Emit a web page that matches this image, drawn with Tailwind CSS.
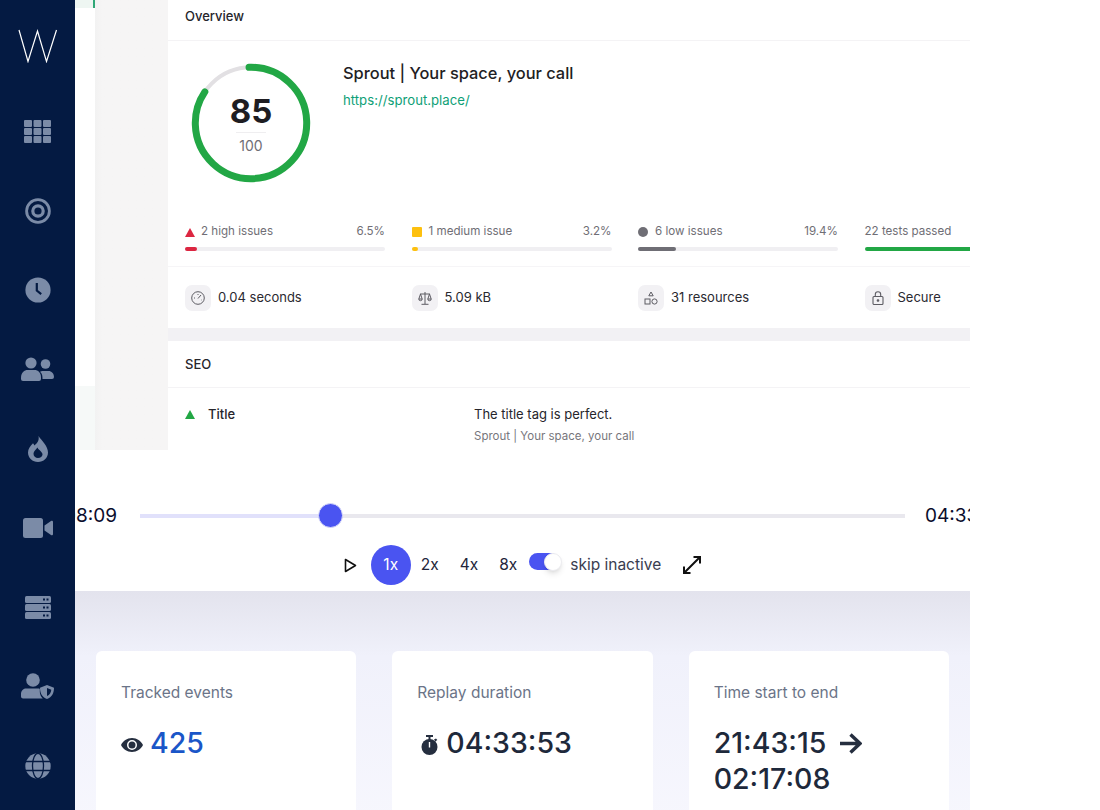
<!DOCTYPE html>
<html lang="en">
<head>
  <meta charset="UTF-8">
  <meta name="viewport" content="width=device-width, initial-scale=1.0">
  <title>Session replay</title>
  <script src="https://cdn.jsdelivr.net/npm/@tailwindcss/browser@4"></script>
</head>
<body class="bg-white font-['Inter',sans-serif]">
  <div class="flex w-[1100px] h-[810px] overflow-hidden bg-white">
    <!-- Sidebar -->
    <aside class="w-[75px] h-full shrink-0 bg-[#041a42] flex flex-col items-center">
      <div class="h-[92px] flex items-center justify-center">
        <svg width="40" height="34" viewBox="0 0 40 34" fill="none" stroke="#fff" stroke-width="1.2"><path d="M1 1L10 32.500L19.500 2L28.500 32.500L38.500 1"/></svg>
      </div>
      <div class="h-[79.25px] flex items-center justify-center">
        <svg width="27" height="23" viewBox="0 0 27 23" fill="#7b8ba7"><rect width="8" height="7" rx="1"/><rect x="9.5" width="8" height="7" rx="1"/><rect x="19" width="8" height="7" rx="1"/><rect y="8" width="8" height="7" rx="1"/><rect x="9.5" y="8" width="8" height="7" rx="1"/><rect x="19" y="8" width="8" height="7" rx="1"/><rect y="16" width="8" height="7" rx="1"/><rect x="9.5" y="16" width="8" height="7" rx="1"/><rect x="19" y="16" width="8" height="7" rx="1"/></svg>
      </div>
      <div class="h-[79.25px] flex items-center justify-center">
        <svg width="26" height="26" viewBox="0 0 26 26" fill="none" stroke="#7b8ba7"><circle cx="13" cy="13" r="11.4" stroke-width="2.8"/><circle cx="13" cy="13" r="5.2" stroke-width="3.2"/></svg>
      </div>
      <div class="h-[79.25px] flex items-center justify-center">
        <svg width="26" height="26" viewBox="0 0 26 26"><circle cx="13" cy="13" r="12.6" fill="#7b8ba7"/><path d="M11.8 6v7.6l4.4 3.6" fill="none" stroke="#041a42" stroke-width="2.2"/></svg>
      </div>
      <div class="h-[79.25px] flex items-center justify-center">
        <svg width="33" height="24" viewBox="0 0 33 24" fill="#7b8ba7"><circle cx="10" cy="6" r="5.6"/><path d="M0 20.5C0 15.5 3.5 13 6.5 13h7c3.500 0 6.500 2.500 6.500 7.500V22a2 2 0 0 1-2 2H2a2 2 0 0 1-2-2z"/><circle cx="24.500" cy="7" r="4.800"/><path d="M21 14h6.500c3 0 5.500 2.500 5.500 6a2 2 0 0 1-2 2H21.500c0-3-.2-5.500-2.500-7.300z"/></svg>
      </div>
      <div class="h-[79.25px] flex items-center justify-center">
        <svg width="20" height="26" viewBox="0 0 20 26" fill="#7b8ba7"><path fill-rule="evenodd" d="M10.500 0c1 5-1.500 7-4 9.500C6 8.500 5.500 8 5 7.200 2 10 0 13 0 16.500 0 22 4.500 26 10 26s10-4 10-9.500C20 10 14 5 10.500 0zM10 22c-2.500 0-4.500-1.800-4.500-4.200 0-2.600 2.500-4.300 4-6.300 .6 1.800 2 2.300 3.200 3.700 1.200 1.300 1.800 2.200 1.800 3.200C14.500 20.300 12.500 22 10 22z"/></svg>
      </div>
      <div class="h-[79.25px] flex items-center justify-center">
        <svg width="30" height="20" viewBox="0 0 30 20" fill="#7b8ba7"><rect width="20" height="20" rx="2.500"/><path d="M21.500 7.500L28 3c1-.6 2 0 2 1v12c0 1-1 1.600-2 1l-6.500-4.500z"/></svg>
      </div>
      <div class="h-[79.25px] flex items-center justify-center">
        <svg width="26" height="23" viewBox="0 0 26 23" fill="#7b8ba7"><rect width="26" height="7" rx="1.500"/><rect y="8" width="26" height="7" rx="1.500"/><rect y="16" width="26" height="7" rx="1.500"/><g fill="#041a42"><rect x="18" y="2.500" width="2" height="2"/><rect x="21.500" y="2.500" width="2" height="2"/><rect x="18" y="10.500" width="2" height="2"/><rect x="21.500" y="10.500" width="2" height="2"/><rect x="18" y="18.500" width="2" height="2"/><rect x="21.500" y="18.500" width="2" height="2"/></g></svg>
      </div>
      <div class="h-[79.25px] flex items-center justify-center">
        <svg width="33" height="26" viewBox="0 0 33 26" fill="#7b8ba7"><circle cx="12" cy="7" r="6.800"/><path d="M5 15.500h12c.5 0 1.500.1 1.800.3v3c0 2.500 1 4.700 3 6.700H2c-1 0-2-1-2-2v-2.500c0-3 2-5.500 5-5.500z"/><path fill-rule="evenodd" d="M26 12l7 2.800c0 5.500-2 9.500-7 11.200-5-1.700-7-5.700-7-11.200zm0 3v8c2.800-1.300 4-3.500 4.300-6.300z"/></svg>
      </div>
      <div class="h-[79.25px] flex items-center justify-center">
        <svg width="26" height="26" viewBox="0 0 26 26"><circle cx="13" cy="13" r="12.700" fill="#7b8ba7"/><g fill="none" stroke="#041a42" stroke-width="1.300"><ellipse cx="13" cy="13" rx="5.500" ry="12.700"/><path d="M0 8.500h26M0 17.500h26"/></g></svg>
      </div>
    </aside>

    <main class="w-[895px] h-full shrink-0 flex flex-col overflow-hidden">
      <!-- Report -->
      <section class="h-[450px] shrink-0 flex overflow-hidden">
        <div class="w-[20px] shrink-0 flex flex-col justify-between bg-white">
          <div class="h-[8px] bg-[#eef6f2] border-r-2 border-[#2fa877]"></div>
          <div class="h-[64px] bg-[#f6f9f8]"></div>
        </div>
        <div class="w-[73px] shrink-0 bg-gradient-to-r from-[#f2f2f2] via-[#f6f5f5] via-10% to-[#f6f5f5]"></div>
        <div class="w-[802px] shrink-0 bg-white">
          <div class="h-[41px] px-[17px] pb-[16px] flex items-end border-b border-[#f4f3f5] text-[13px] leading-[16px] font-[450] text-[#26252b]">Overview</div>
          <div class="h-[165px] flex">
            <div class="relative ml-[23px] mt-[22px] w-[120px] h-[120px]">
              <svg class="absolute inset-0" width="120" height="120" viewBox="0 0 120 120" fill="none">
                <circle cx="60" cy="60" r="55.700" stroke="#e2e0e3" stroke-width="4"/>
                <circle cx="60" cy="60" r="55.700" stroke="#22a745" stroke-width="7" stroke-linecap="round" pathLength="100" stroke-dasharray="85 100" transform="rotate(-92 60 60)"/>
              </svg>
              <div class="absolute inset-0 flex flex-col items-center">
                <div class="mt-[28px] text-[33px] leading-[41px] font-bold text-[#1e1d22]">85</div>
                <div class="w-[30px] h-px bg-[#efeef0]"></div>
                <div class="mt-[4px] text-[14px] leading-[17px] text-[#6f6e75]">100</div>
              </div>
            </div>
            <div class="ml-[32px] mt-[21px]">
              <div class="text-[16.400px] leading-[22px] font-[450] text-[#1f1e24]">Sprout | Your space, your call</div>
              <div class="mt-[8px] text-[13.200px] leading-[16px] text-[#0e9f77]">https://sprout.place/</div>
            </div>
          </div>
          <div class="grid grid-cols-[200px_200px_200px_200px] gap-x-[26.500px] pl-[17px] pt-[19px] h-[61px] border-b border-[#f6f5f7]">
            <div>
              <div class="flex items-center justify-between h-[14px] text-[11.600px] text-[#6f6e75]">
                <span class="flex items-center gap-[6px]"><svg width="10" height="9" viewBox="0 0 10 9" fill="#dc2641"><path d="M5 0l5 9H0z"/></svg>2 high issues</span><span>6.5%</span>
              </div>
              <div class="mt-[8px] h-[4px] rounded-full bg-[#f0eff2]"><div class="h-full w-[12px] rounded-full bg-[#dc2641]"></div></div>
            </div>
            <div>
              <div class="flex items-center justify-between h-[14px] text-[11.600px] text-[#6f6e75]">
                <span class="flex items-center gap-[7px]"><span class="w-[10px] h-[10px] rounded-[1px] bg-[#fdc00f]"></span>1 medium issue</span><span>3.2%</span>
              </div>
              <div class="mt-[8px] h-[4px] rounded-full bg-[#f0eff2]"><div class="h-full w-[6px] rounded-full bg-[#fdc00f]"></div></div>
            </div>
            <div>
              <div class="flex items-center justify-between h-[14px] text-[11.600px] text-[#6f6e75]">
                <span class="flex items-center gap-[7px]"><span class="w-[10px] h-[10px] rounded-full bg-[#6f6e75]"></span>6 low issues</span><span>19.4%</span>
              </div>
              <div class="mt-[8px] h-[4px] rounded-full bg-[#f0eff2]"><div class="h-full w-[38px] rounded-full bg-[#6f6e75]"></div></div>
            </div>
            <div>
              <div class="flex items-center h-[14px] text-[11.600px] text-[#6f6e75]">22 tests passed</div>
              <div class="mt-[8px] h-[4px] rounded-full bg-[#22a745]"></div>
            </div>
          </div>
          <div class="grid grid-cols-[200px_200px_200px_200px] gap-x-[26.500px] pl-[17px] pt-[18px] h-[61px] text-[13px] text-[#2a2930]">
            <div class="flex items-center gap-[7px] h-[26px]">
              <span class="w-[26px] h-[26px] rounded-[7px] bg-[#f2f1f4] flex items-center justify-center">
                <svg width="14" height="14" viewBox="0 0 14 14" fill="none" stroke="#5d5c63" stroke-width="1"><circle cx="7" cy="7" r="6.300"/><path d="M7 7.500L10 4M3 7h1M7 3v1M10.500 9H10"/></svg>
              </span>0.04 seconds
            </div>
            <div class="flex items-center gap-[7px] h-[26px]">
              <span class="w-[26px] h-[26px] rounded-[7px] bg-[#f2f1f4] flex items-center justify-center">
                <svg width="14" height="14" viewBox="0 0 14 14" fill="none" stroke="#5d5c63" stroke-width="1"><path d="M7 1v12M3.500 13.300h7M2 3h10M2.500 3L.8 8h3.400zM11.500 3l-1.700 5h3.400zM.8 8a1.700 1.700 0 0 0 3.400 0M9.800 8a1.700 1.700 0 0 0 3.400 0"/></svg>
              </span>5.09 kB
            </div>
            <div class="flex items-center gap-[7px] h-[26px]">
              <span class="w-[26px] h-[26px] rounded-[7px] bg-[#f2f1f4] flex items-center justify-center">
                <svg width="14" height="14" viewBox="0 0 14 14" fill="none" stroke="#5d5c63" stroke-width="1"><path d="M7 1l2.200 3.800H4.800z"/><rect x="1" y="8" width="5" height="5"/><circle cx="10.500" cy="10.500" r="2.600"/></svg>
              </span>31 resources
            </div>
            <div class="flex items-center gap-[7px] h-[26px]">
              <span class="w-[26px] h-[26px] rounded-[7px] bg-[#f2f1f4] flex items-center justify-center">
                <svg width="12" height="14" viewBox="0 0 12 14" fill="none" stroke="#5d5c63" stroke-width="1.100"><rect x="1" y="5.500" width="10" height="8" rx="1"/><path d="M3.300 5.500V3.500a2.700 2.700 0 0 1 5.400 0v2"/><circle cx="6" cy="9.500" r=".8" fill="#5d5c63"/></svg>
              </span>Secure
            </div>
          </div>
          <div class="h-[13px] bg-[#f2f1f4]"></div>
          <div class="h-[47px] px-[17px] pt-[1px] flex items-center border-b border-[#f4f3f5] text-[13px] font-[450] text-[#26252b]">SEO</div>
          <div class="flex pl-[17px] pt-[18px]">
            <div class="w-[289px] flex items-center gap-[13px] h-[17px] text-[13px] font-medium text-[#26252b]">
              <svg width="10" height="9" viewBox="0 0 10 9" fill="#22a745"><path d="M5 0l5 9H0z"/></svg>Title
            </div>
            <div>
              <div class="text-[13px] leading-[16px] text-[#26252b]">The title tag is perfect.</div>
              <div class="mt-[7px] text-[11.500px] leading-[14px] text-[#77767c]">Sprout | Your space, your call</div>
            </div>
          </div>
        </div>
      </section>

      <!-- Player -->
      <section class="h-[141px] shrink-0 bg-white pt-[51px] overflow-hidden">
        <div class="flex items-center h-[30px] text-[19px] text-[#0b0d2c]">
          <div class="w-[42px] shrink-0 flex justify-end overflow-hidden"><span class="shrink-0">08:09</span></div>
          <div class="relative ml-[23px] w-[765px] h-[4px] shrink-0 bg-[#e9e8ee]">
            <div class="h-full w-[190px] bg-[#e1e1fb]"></div>
            <div class="absolute left-[178px] top-[-11px] w-[25px] h-[25px] rounded-full bg-[#4a54f1] border border-[#d9daf8]"></div>
          </div>
          <div class="ml-[20px] shrink-0">04:33:53</div>
        </div>
        <div class="mt-[14px] h-[40px] flex items-center justify-center pl-[1px] text-[15.500px] text-[#23253a]">
          <svg width="13" height="15" viewBox="0 0 13 15" fill="none" stroke="#111" stroke-width="1.600" stroke-linejoin="round"><path d="M1.500 1.500v12l10-6z"/></svg>
          <span class="ml-[14px] w-[40px] h-[40px] rounded-full bg-[#4a54f1] text-white flex items-center justify-center">1x</span>
          <span class="ml-[10px]">2x</span>
          <span class="ml-[21px]">4x</span>
          <span class="ml-[21px]">8x</span>
          <span class="relative ml-[12px] mb-[8px] w-[30px] h-[17px] rounded-full bg-[#4a54f1]">
            <span class="absolute left-[15px] top-[0px] w-[18px] h-[18px] rounded-full bg-white border border-[#ececf0] shadow-md"></span>
          </span>
          <span class="ml-[11px] text-[#3a3d50]">skip inactive</span>
          <svg class="ml-[21px]" width="20" height="20" viewBox="0 0 20 20" fill="none" stroke="#111" stroke-width="2"><path d="M2.500 17.500L17.500 2.500M11.500 2h6.500v6.500M2 11.500V18h6.500"/></svg>
        </div>
      </section>

      <!-- Stats -->
      <section class="flex-1 px-[21px] pt-[60px] grid grid-cols-3 gap-x-[36px] bg-gradient-to-b from-[#e3e3ed] via-[#f0f1fb] via-25% to-[#f8f8fe]">
        <div class="h-[200px] rounded-t-[6px] bg-white px-[25px] pt-[33px]">
          <div class="text-[15.500px] leading-[18px] text-[#6b7488]">Tracked events</div>
          <div class="mt-[23px] flex items-center gap-[7px] text-[28.500px] leading-[36px] font-medium text-[#1a56c8]">
            <svg class="mt-[4px]" width="22" height="14" viewBox="0 0 22 14"><path fill-rule="evenodd" fill="#252e3f" d="M11 0C6 0 2 3 0 7c2 4 6 7 11 7s9-3 11-7c-2-4-6-7-11-7zm0 12a5 5 0 1 1 0-10 5 5 0 0 1 0 10z"/><circle cx="11" cy="7" r="3.500" fill="#252e3f"/></svg>425
          </div>
        </div>
        <div class="h-[200px] rounded-t-[6px] bg-white px-[25px] pt-[33px]">
          <div class="text-[15.500px] leading-[18px] text-[#6b7488]">Replay duration</div>
          <div class="mt-[23px] flex items-center gap-[8px] text-[28.500px] leading-[36px] font-medium text-[#1e293b]">
            <svg class="mt-[3px] ml-[4px]" width="17" height="20" viewBox="0 0 17 20" fill="#252e3f"><rect x="5" width="7" height="2"/><rect x="7.500" y="1" width="2" height="4"/><circle cx="8.500" cy="12" r="8"/><path d="M13 4.500l2-1 1.300 1.500-2 1.500z"/><rect x="7.800" y="7" width="1.400" height="5.500" fill="#fff"/></svg>04:33:53
          </div>
        </div>
        <div class="h-[200px] rounded-t-[6px] bg-white px-[25px] pt-[33px]">
          <div class="text-[15.500px] leading-[18px] text-[#6b7488]">Time start to end</div>
          <div class="mt-[23px] text-[28.500px] leading-[36px] font-medium text-[#1e293b]">
            21:43:15 <svg class="inline-block ml-[5px] mb-[4px]" width="23" height="23" viewBox="0 0 23 23" fill="none" stroke="#252e3f" stroke-width="3.400"><path d="M1 11.500h19M11.500 2.500l9.500 9-9.500 9"/></svg> 02:17:08
          </div>
        </div>
      </section>
    </main>
  </div>
</body>
</html>
